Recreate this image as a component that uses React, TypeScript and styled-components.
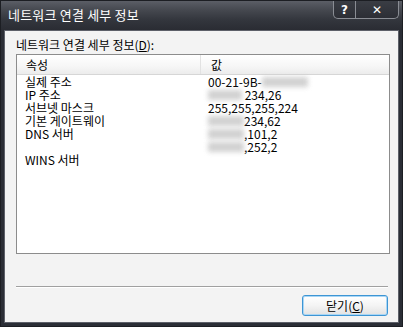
import React from 'react';
import styled, { createGlobalStyle } from 'styled-components';

const GlobalStyle = createGlobalStyle`
    html, body {
        margin: 0;
        padding: 0;
        background: #ffffff;
    }
    body {
        font-family: "Noto Sans CJK KR", "DejaVu Sans", sans-serif;
        font-size: 12px;
    }
`;

const Window = styled.div`
    display: flex;
    flex-direction: column;
    width: 403px;
    height: 327px;
    box-sizing: border-box;
    background: #2b2e36;
    border: 1px solid #1c1e23;
`;

const TitleBar = styled.div`
    display: flex;
    align-items: flex-start;
    justify-content: space-between;
    height: 29px;
    padding-left: 7px;
    padding-right: 3px;
    background: linear-gradient(to bottom, #5b5e66 0%, #464950 30%, #33363d 65%, #2a2c33 100%);
`;

const TitleText = styled.div`
    color: #ffffff;
    font-size: 13px;
    line-height: 13px;
    padding-top: 7px;
    letter-spacing: 0.2px;
`;

const CaptionButtons = styled.div`
    display: flex;
    height: 17px;
    border: 1px solid #8a8d94;
    border-top: none;
    border-radius: 0 0 5px 5px;
    background: linear-gradient(to bottom, #3a3d44, #2c2e35);
    overflow: hidden;
`;

const CaptionButton = styled.div<{ $w: number; $divider?: boolean }>`
    display: flex;
    align-items: center;
    justify-content: center;
    width: ${(p) => p.$w}px;
    height: 100%;
    color: #ffffff;
    font-family: "DejaVu Sans", sans-serif;
    font-weight: bold;
    font-size: 12px;
    border-right: ${(p) => (p.$divider ? '1px solid #8a8d94' : 'none')};
`;

const Body = styled.div`
    flex: 1;
    display: flex;
    flex-direction: column;
    margin: 0 3px 3px 3px;
    padding: 6px 10px 0 11px;
    background: #f3f3f3;
    border: 1px solid #5d6069;
`;

const Label = styled.div`
    color: #000000;
    height: 17px;
    line-height: 15px;
    & u {
        text-decoration: underline;
    }
`;

const ListBox = styled.div`
    width: 374px;
    height: 200px;
    box-sizing: border-box;
    border: 1px solid #8c8c8c;
    background: #ffffff;
`;

const HeaderRow = styled.div`
    display: grid;
    grid-template-columns: 184px 1fr;
    height: 20px;
    background: linear-gradient(to bottom, #ffffff 0%, #f6f6f6 60%, #ececec 100%);
    border-bottom: 1px solid #d6d6d6;
    box-sizing: border-box;
`;

const HeaderCell = styled.div<{ $pad: number; $divider?: boolean }>`
    padding-left: ${(p) => p.$pad}px;
    line-height: 19px;
    color: #000000;
    border-right: ${(p) => (p.$divider ? '1px solid #e2e2e2' : 'none')};
`;

const Row = styled.div`
    display: grid;
    grid-template-columns: 184px 1fr;
    height: 13px;
    line-height: 13px;
`;

const Cell = styled.div<{ $pad: number }>`
    padding-left: ${(p) => p.$pad}px;
    white-space: nowrap;
    color: #000000;
    display: flex;
    align-items: center;
`;

const Blur = styled.span<{ $w: number }>`
    display: inline-block;
    width: ${(p) => p.$w}px;
    height: 10px;
    background: #c6c6c6;
    filter: blur(2.5px);
    opacity: 0.8;
`;

const Separator = styled.div`
    width: 372px;
    height: 1px;
    margin-top: 32px;
    background: #a0a0a0;
    border-bottom: 1px solid #ffffff;
`;

const Footer = styled.div`
    display: flex;
    justify-content: flex-end;
    padding-top: 7px;
`;

const Button = styled.div`
    display: flex;
    align-items: center;
    justify-content: center;
    width: 86px;
    height: 21px;
    box-sizing: border-box;
    border: 1px solid #3d95d4;
    border-radius: 3px;
    background: linear-gradient(to bottom, #ffffff 0%, #f4f4f4 50%, #e2e2e2 100%);
    box-shadow: inset 0 0 0 1px #a9d6f5;
    color: #000000;
    & u {
        text-decoration: underline;
    }
`;

type Item = { name: string; value: React.ReactNode };

const items: Item[] = [
    {
        name: '실제 주소',
        value: (
            <>
                00-21-9B-<Blur $w={46} />
            </>
        ),
    },
    {
        name: 'IP 주소',
        value: (
            <>
                <Blur $w={34} />
                <span>&nbsp;234,26</span>
            </>
        ),
    },
    { name: '서브넷 마스크', value: '255,255,255,224' },
    {
        name: '기본 게이트웨이',
        value: (
            <>
                <Blur $w={36} />
                <span>234,62</span>
            </>
        ),
    },
    {
        name: 'DNS 서버',
        value: (
            <>
                <Blur $w={36} />
                <span>,101,2</span>
            </>
        ),
    },
    {
        name: '',
        value: (
            <>
                <Blur $w={36} />
                <span>,252,2</span>
            </>
        ),
    },
    { name: 'WINS 서버', value: '' },
];

const App: React.FC = () => {
    return (
        <>
            <GlobalStyle />
            <Window>
                <TitleBar>
                    <TitleText>네트워크 연결 세부 정보</TitleText>
                    <CaptionButtons>
                        <CaptionButton $w={21} $divider>
                            ?
                        </CaptionButton>
                        <CaptionButton $w={42}>✕</CaptionButton>
                    </CaptionButtons>
                </TitleBar>
                <Body>
                    <Label>
                        네트워크 연결 세부 정보(<u>D</u>):
                    </Label>
                    <ListBox>
                        <HeaderRow>
                            <HeaderCell $pad={9} $divider>
                                속성
                            </HeaderCell>
                            <HeaderCell $pad={10}>값</HeaderCell>
                        </HeaderRow>
                        {items.map((it, i) => (
                            <Row key={i}>
                                <Cell $pad={8}>{it.name}</Cell>
                                <Cell $pad={7}>{it.value}</Cell>
                            </Row>
                        ))}
                    </ListBox>
                    <Separator />
                    <Footer>
                        <Button>
                            닫기(<u>C</u>)
                        </Button>
                    </Footer>
                </Body>
            </Window>
        </>
    );
};

export default App;
